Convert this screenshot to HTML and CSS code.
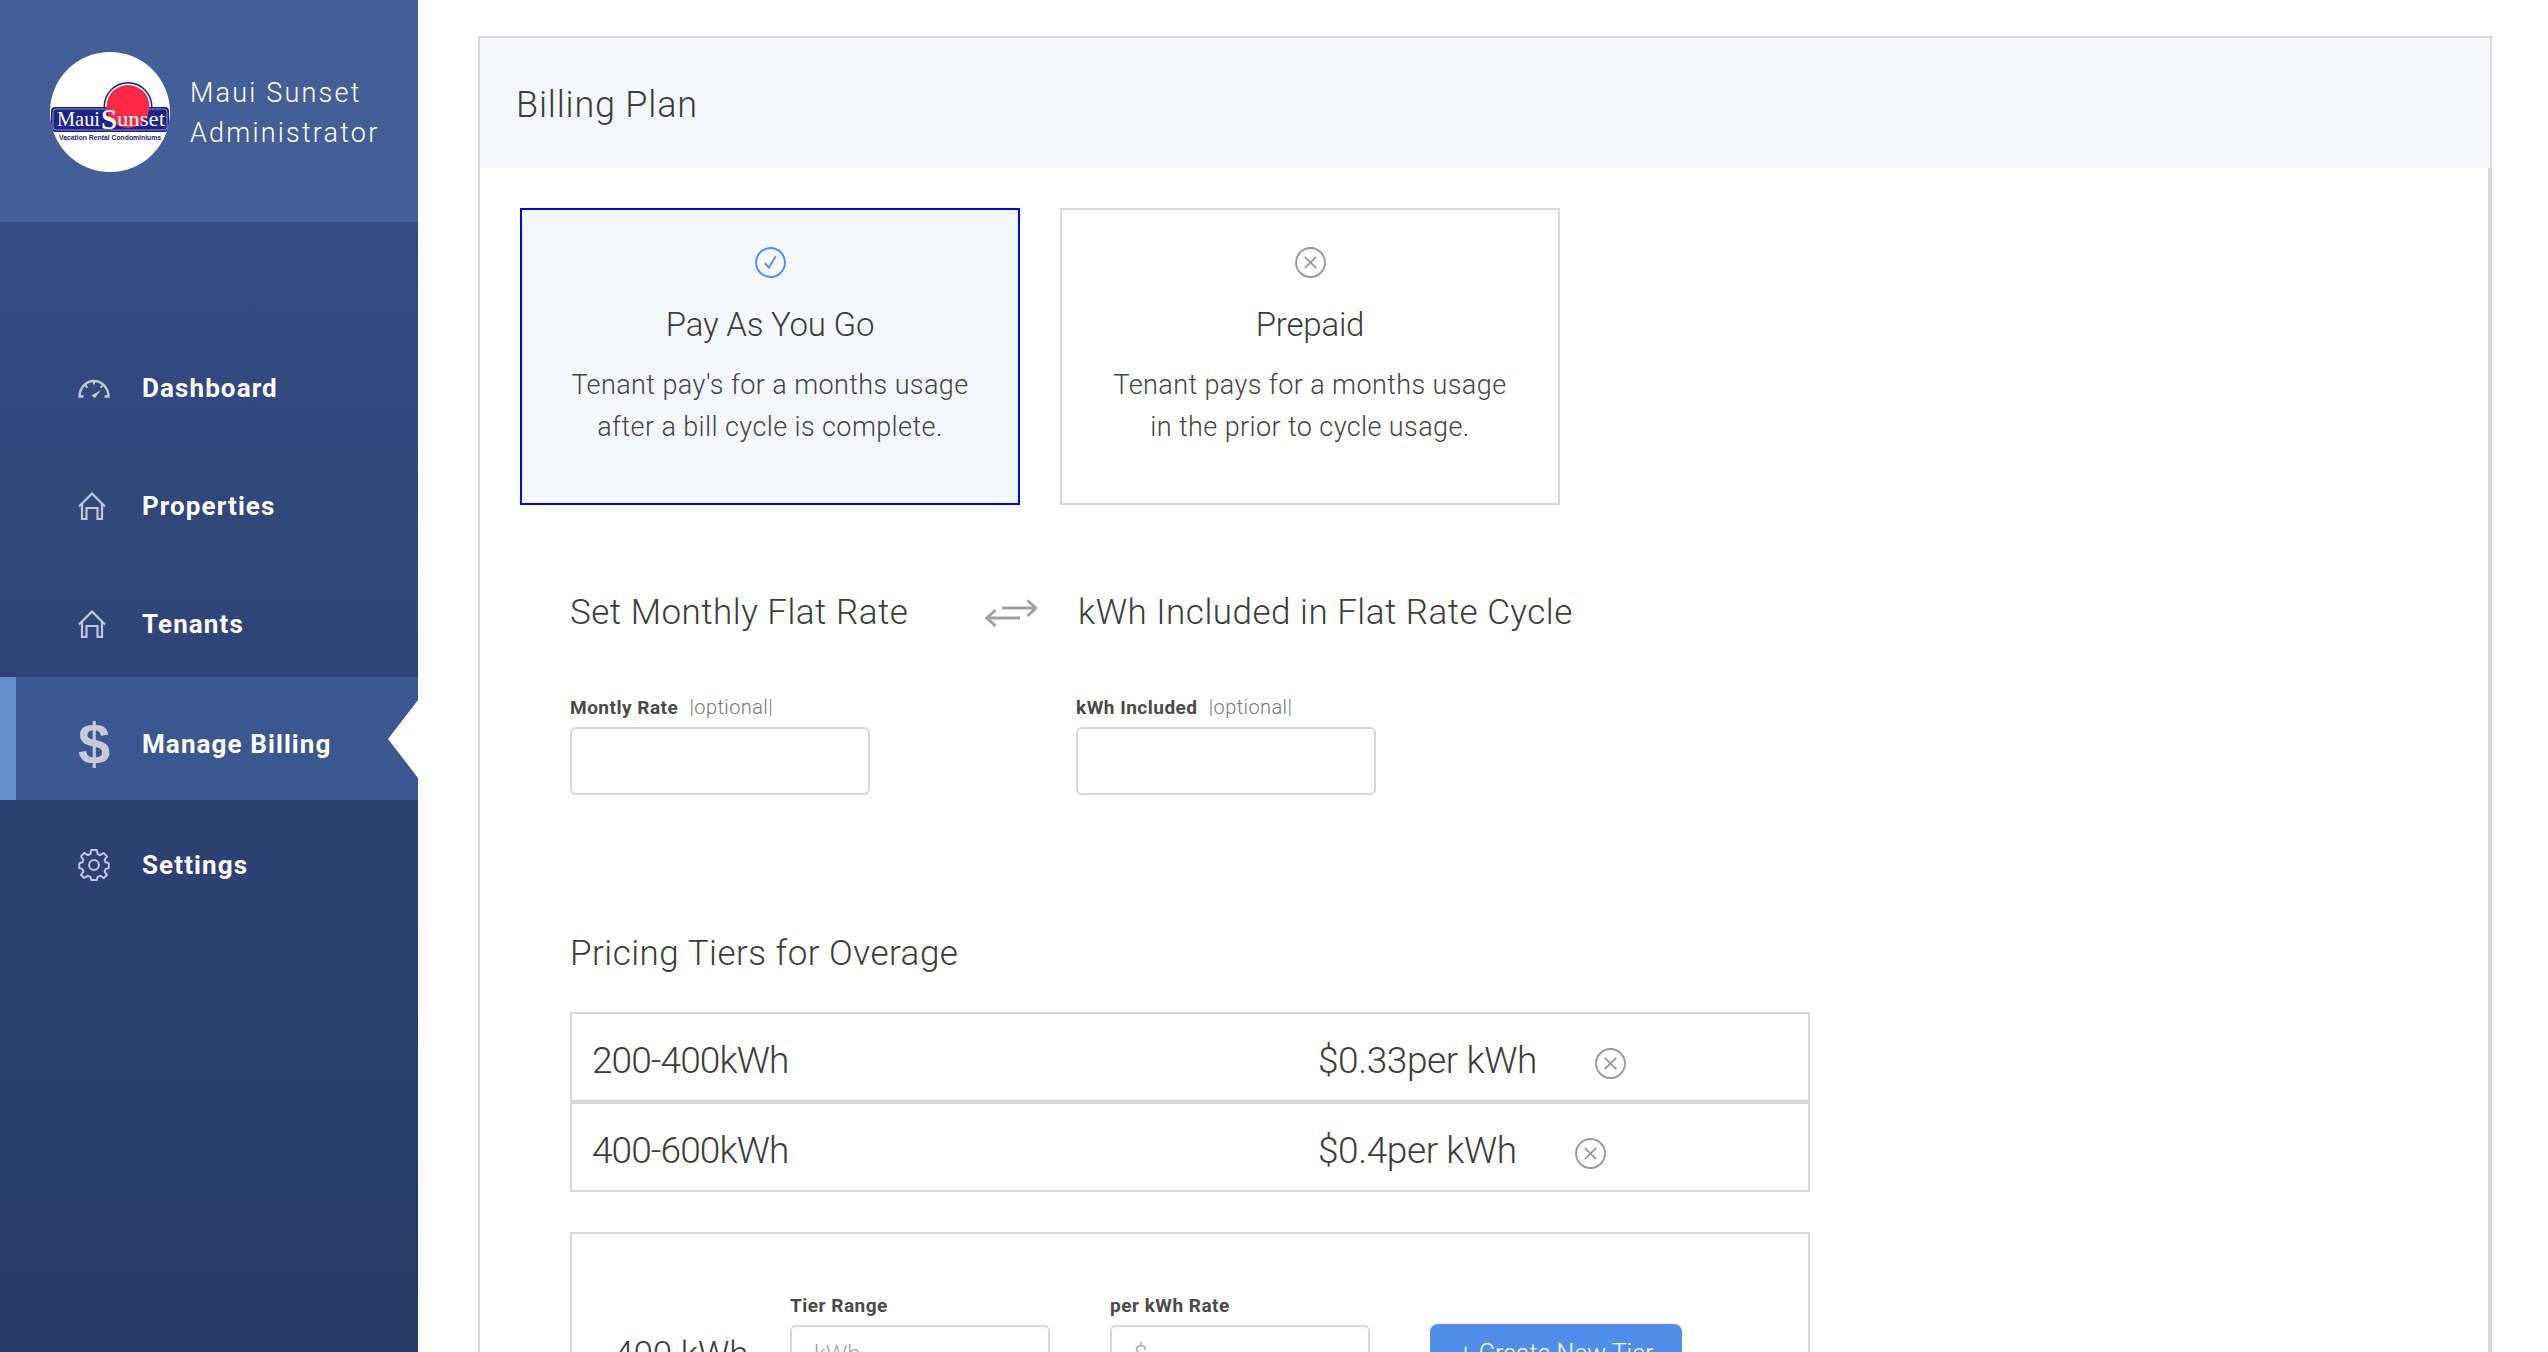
FILE: index.html
```html
<!DOCTYPE html>
<html lang="en">
<head>
<meta charset="utf-8">
<title>Billing Plan</title>
<link rel="stylesheet" href="styles.css">
</head>
<body>
<div class="app">
  <aside class="sidebar">
    <header class="brand">
      <svg class="logo" viewBox="0 0 120 120">
        <defs><clipPath id="logo-clip"><circle cx="60" cy="60" r="60"/></clipPath></defs>
        <g clip-path="url(#logo-clip)">
          <rect width="120" height="120" fill="#fff"/>
          <circle cx="78" cy="54.5" r="24.5" fill="#1d2288"/>
          <circle cx="78" cy="54.5" r="23" fill="#fff"/>
          <rect x="1" y="55" width="118" height="25" rx="4" fill="#1d2288"/>
          <rect x="3" y="57" width="114" height="21" rx="3" fill="none" stroke="#fff" stroke-width=".5"/>
          <circle cx="78" cy="54.5" r="21.5" fill="#ff2846"/>
          <text class="logo-name" x="7" y="74" textLength="43" lengthAdjust="spacingAndGlyphs">Maui</text>
          <text class="logo-s" x="51" y="77">S</text>
          <text class="logo-name" x="67" y="74" textLength="48" lengthAdjust="spacingAndGlyphs">unset</text>
          <text class="logo-sub" x="9" y="88" textLength="102" lengthAdjust="spacingAndGlyphs">Vacation Rental Condominiums</text>
        </g>
      </svg>
      <div class="brand-text">
        <div>Maui Sunset</div>
        <div>Administrator</div>
      </div>
    </header>
    <nav class="nav">
      <a class="nav-item">
        <span class="nav-slot">
          <svg class="icon-gauge" viewBox="0 0 32 20" fill="none" stroke="currentColor" stroke-width="2.4"><path d="M5.5 17.5H1.5C1.5 9 8 2 16 2s14.5 7 14.5 15.5h-4"/><path d="M7.5 6.500l2 2.200M16 2v3.500M24.500 6.500l-2 2.200" stroke-width="2"/><path d="M13.500 16.500l9.500-5.500-6 8z" fill="currentColor" stroke="none"/></svg>
        </span>
        <span>Dashboard</span>
      </a>
      <a class="nav-item">
        <span class="nav-slot">
          <svg class="icon-home" viewBox="0 0 28 28" fill="none" stroke="currentColor" stroke-width="2.2"><path d="M1 14.5L14 1.500l13 13"/><path d="M4 11.500V27h4.500V16h11v11H24V11.500"/></svg>
        </span>
        <span>Properties</span>
      </a>
      <a class="nav-item">
        <span class="nav-slot">
          <svg class="icon-home" viewBox="0 0 28 28" fill="none" stroke="currentColor" stroke-width="2.2"><path d="M1 14.5L14 1.500l13 13"/><path d="M4 11.500V27h4.500V16h11v11H24V11.500"/></svg>
        </span>
        <span>Tenants</span>
      </a>
      <a class="nav-item nav-item-active">
        <span class="nav-slot"><span class="nav-dollar">$</span></span>
        <span>Manage Billing</span>
      </a>
      <a class="nav-item nav-item-last">
        <span class="nav-slot">
          <svg class="icon-gear" viewBox="0 0 32 32.6" fill="none" stroke="currentColor" stroke-width="2" stroke-linejoin="round"><circle cx="16" cy="16.3" r="5"/><path d="M13.2 1h5.6l.9 4.100 2.600 1.100 3.600-2.200 3.300 3.600-2.400 3.400.9 2.500 3.300 1v5l-3.300 1-.9 2.500 2.400 3.400-3.300 3.100-3.600-2.200-2.600 1.100-.9 3.200h-5.600l-.9-3.200-2.600-1.100-3.600 2.200-3.300-3.100 2.400-3.400-.9-2.500-3.300-1v-5l3.300-1 .9-2.500-2.400-3.400 3.300-3.600 3.600 2.200 2.600-1.100z"/></svg>
        </span>
        <span>Settings</span>
      </a>
    </nav>
  </aside>
  <main class="main">
    <section class="panel">
      <h1 class="panel-head">Billing Plan</h1>
      <div class="panel-body">
        <div class="plans">
          <div class="plan plan-on">
            <svg class="status status-on" viewBox="0 0 30 30" fill="none" stroke="currentColor" stroke-width="1.8"><circle cx="15" cy="15" r="14"/><path d="M9.500 15.500l4 4.500 6.500-11"/></svg>
            <h2 class="plan-title">Pay As You Go</h2>
            <p class="plan-text">Tenant pay's for a months usage<br>after a bill cycle is complete.</p>
          </div>
          <div class="plan">
            <svg class="status" viewBox="0 0 30 30" fill="none" stroke="currentColor" stroke-width="1.8"><circle cx="15" cy="15" r="14"/><path d="M9.500 9.500l11 11M20.500 9.500l-11 11"/></svg>
            <h2 class="plan-title">Prepaid</h2>
            <p class="plan-text">Tenant pays for a months usage<br>in the prior to cycle usage.</p>
          </div>
        </div>
        <div class="rates">
          <div class="rate-head">
            <h3 class="section-title section-a">Set Monthly Flat Rate</h3>
            <svg class="swap" viewBox="0 0 52 28" fill="none" stroke="currentColor" stroke-width="3"><path d="M17 9h34M42.500 1.500L51 9l-8.500 8"/><path d="M35 19H2M10.500 11L2 19l8.500 8"/></svg>
            <h3 class="section-title section-b">kWh Included in Flat Rate Cycle</h3>
          </div>
          <div class="rate-fields">
            <div class="field">
              <label class="field-label">Montly Rate <span class="field-hint">|optional|</span></label>
              <div class="input"></div>
            </div>
            <div class="field">
              <label class="field-label">kWh Included <span class="field-hint">|optional|</span></label>
              <div class="input"></div>
            </div>
          </div>
        </div>
        <h3 class="section-title tiers-title">Pricing Tiers for Overage</h3>
        <div class="tiers">
          <div class="tier">
            <span class="tier-range">200-400kWh</span>
            <span class="tier-price">$0.33per kWh</span>
            <svg class="status tier-x" viewBox="0 0 30 30" fill="none" stroke="currentColor" stroke-width="1.8"><circle cx="15" cy="15" r="14"/><path d="M9.500 9.500l11 11M20.500 9.500l-11 11"/></svg>
          </div>
          <div class="tier">
            <span class="tier-range">400-600kWh</span>
            <span class="tier-price">$0.4per kWh</span>
            <svg class="status tier-x" viewBox="0 0 30 30" fill="none" stroke="currentColor" stroke-width="1.8"><circle cx="15" cy="15" r="14"/><path d="M9.500 9.500l11 11M20.500 9.500l-11 11"/></svg>
          </div>
        </div>
        <div class="new-tier">
          <span class="new-start">400 kWh</span>
          <div class="field field-small">
            <label class="field-label">Tier Range</label>
            <div class="input input-small"><span class="placeholder">kWh</span></div>
          </div>
          <div class="field field-small">
            <label class="field-label">per kWh Rate</label>
            <div class="input input-small"><span class="placeholder">$</span></div>
          </div>
          <button class="create" type="button">+ Create New Tier</button>
        </div>
      </div>
    </section>
  </main>
</div>
</body>
</html>
```
FILE: styles.css
```css
* { box-sizing: border-box; }
html, body { margin: 0; height: 100%; overflow: hidden; background: #fff; }
body { font-family: Roboto, "Liberation Sans", sans-serif; color: #3c3c3c; }
h1, h2, h3, p { margin: 0; font-weight: 300; }

.app { display: flex; height: 1352px; overflow: hidden; }

.sidebar { width: 418px; flex: none; display: flex; flex-direction: column; background: linear-gradient(#354f88, #273a65); }
.brand { height: 222px; flex: none; background: #445f96; display: flex; align-items: center; padding-left: 50px; margin-bottom: 107px; }
.logo { width: 120px; height: 120px; flex: none; margin-top: 2px; }
.logo-name { font: 400 21px "Liberation Serif", serif; fill: #fff; }
.logo-s { font: 700 29px "Liberation Serif", serif; fill: #fff; }
.logo-sub { font: 700 8px "Liberation Sans", sans-serif; fill: #1d2288; }
.brand-text { margin: 4px 0 0 20px; color: #fff; font-size: 27px; font-weight: 300; line-height: 40px; letter-spacing: 2.2px; }

.nav { display: flex; flex-direction: column; }
.nav-item { height: 118px; display: flex; align-items: center; padding-left: 78px; color: #fff; font-size: 26px; font-weight: 700; letter-spacing: 1.1px; position: relative; }
.nav-slot { width: 64px; flex: none; display: flex; align-items: center; color: #c0c8d8; }
.icon-gauge { width: 32px; height: 20px; margin-top: 2px; }
.icon-home { width: 28px; height: 28px; }
.icon-gear { width: 32px; height: 32px; }
.nav-item-active { height: 123px; margin-top: -6px; padding-top: 10px; background: #3a588f; border-left: 16px solid #6490cf; padding-left: 62px; }
.nav-item-active::after { content: ""; position: absolute; right: 0; top: 23px; border-style: solid; border-width: 39px 30px 39px 0; border-color: transparent #fff transparent transparent; }
.nav-item-last { margin-top: 6px; }
.nav-dollar { color: #c5cbd8; font: 700 58px "Liberation Sans", sans-serif; letter-spacing: 0; width: 32px; text-align: center; }

.main { flex: 1; min-width: 0; padding: 36px 56px 0 60px; }
.panel { width: 2014px; }
.panel-head { height: 132px; background: #f4f7fc; border: 2px solid #d8d8d8; border-bottom: 0; padding: 3px 0 0 36px; display: flex; align-items: center; font-size: 36px; letter-spacing: .8px; color: #3c3c3c; }
.panel-body { border-left: 2px solid #d8d8d8; border-right: 4px solid #d8d8d8; padding: 40px 0 0 40px; }

.plans { display: flex; gap: 40px; }
.plan { width: 500px; height: 297px; border: 2px solid #d8d8d8; display: flex; flex-direction: column; align-items: center; padding-top: 37px; text-align: center; }
.plan-on { border-color: #00f; background: #f4f7fc; }
.status { width: 31px; height: 31px; color: #999; flex: none; display: block; }
.status-on { color: #4f8fe8; }
.plan-title { font-size: 33px; margin-top: 27px; line-height: 40px; letter-spacing: -.2px; }
.plan-text { font-size: 27px; line-height: 42px; margin-top: 19px; color: #444; letter-spacing: .4px; }

.rates { margin-left: 50px; margin-top: 81px; }
.rate-head { display: flex; align-items: center; height: 54px; }
.section-title { font-size: 35px; line-height: 54px; letter-spacing: .5px; }
.section-a { width: 415px; }
.swap { width: 52px; height: 28px; color: #a0a0a0; flex: none; }
.section-b { margin-left: 41px; }
.rate-fields { display: flex; gap: 206px; margin-top: 55px; }
.field { width: 300px; }
.field-label { display: block; font-size: 19px; font-weight: 700; line-height: 24px; letter-spacing: .5px; color: #4a4a4a; margin-bottom: 7px; }
.field-hint { font-weight: 300; color: #777; margin-left: 6px; font-size: 20px; letter-spacing: .4px; }
.input { height: 68px; border: 2px solid #d8d8d8; border-radius: 6px; background: #fff; display: flex; align-items: center; }

.tiers-title { margin: 132px 0 0 50px; }
.tiers { width: 1240px; margin: 31px 0 0 50px; }
.tier { height: 90px; border: 2px solid #d8d8d8; padding-top: 6px; display: flex; align-items: center; font-size: 37px; font-weight: 300; }
.tier-range { width: 746px; padding-left: 20px; flex: none; letter-spacing: -.9px; }
.tier-price { letter-spacing: -.4px; }
.tier-x { margin: 6px 0 0 58px; }

.new-tier { width: 1240px; height: 200px; margin: 40px 0 0 50px; border: 2px solid #d8d8d8; display: flex; padding: 60px 0 0 42px; }
.new-start { font-size: 35px; font-weight: 300; width: 176px; margin-top: 40px; flex: none; }
.field-small { width: 260px; margin-right: 60px; flex: none; }
.input-small { height: 58px; padding-left: 22px; }
.placeholder { color: #a5a5a5; font-size: 24px; font-weight: 300; }
.create { width: 252px; height: 58px; margin-top: 30px; border: 0; border-radius: 8px; background: #4f8fe8; color: #fff; font: 300 25px Roboto, sans-serif; }
```
